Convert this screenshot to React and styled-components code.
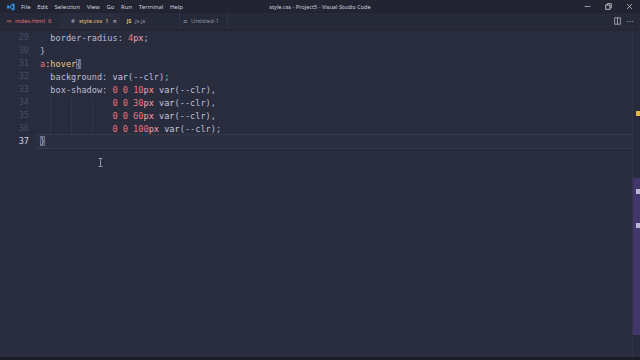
import React from "react";
import styled, { createGlobalStyle } from "styled-components";

const Global = createGlobalStyle`
  html, body { margin: 0; padding: 0; background: #292c3c; overflow: hidden; }
  #root { width: 640px; height: 360px; }
`;

const Window = styled.div`
  width: 640px;
  height: 360px;
  display: flex;
  flex-direction: column;
  background: #292c3c;
  font-family: "Noto Sans", "Open Sans", sans-serif;
  position: relative;
  overflow: hidden;
`;

const TitleBar = styled.div`
  height: 13px;
  flex: none;
  display: flex;
  align-items: center;
  background: #222432;
  color: #cdd0dc;
  font-size: 6px;
  position: relative;
`;

const Logo = styled.div`
  width: 20px;
  display: flex;
  justify-content: center;
  align-items: center;
  padding-left: 1px;
`;

const Menu = styled.div`
  display: flex;
  gap: 6.6px;
`;

const Title = styled.div`
  position: absolute;
  left: 0;
  right: 0;
  text-align: center;
  pointer-events: none;
  font-size: 5.6px;
  color: #cdd0dc;
`;

const Controls = styled.div`
  margin-left: auto;
  display: flex;
  align-items: center;
  gap: 14px;
  padding-right: 7px;
`;

const TabBar = styled.div`
  height: 16px;
  flex: none;
  display: flex;
  align-items: stretch;
  background: #262938;
  font-size: 6px;
  box-shadow: 0 1px 2px rgba(0, 0, 0, 0.25);
  position: relative;
  z-index: 1;
`;

const Tab = styled.div`
  display: flex;
  align-items: center;
  gap: 3px;
  padding: 0 0 0 ${(p) => p.$pl || 8}px;
  width: ${(p) => p.$w}px;
  box-sizing: border-box;
  background: ${(p) => (p.$active ? "#2a2d3e" : "transparent")};
  color: ${(p) => p.$color};
  border-right: 1px solid ${(p) => (p.$sep ? "#30344a" : "transparent")};
`;

const TabIcon = styled.span`
  color: ${(p) => p.$color};
  font-size: ${(p) => p.$size || 6}px;
  font-weight: 700;
  width: 6px;
  text-align: center;
`;

const TabBadge = styled.span`
  color: ${(p) => p.$color};
`;

const TabClose = styled.span`
  margin-left: 1px;
  color: #c9ccd8;
  font-size: 7px;
`;

const TabActions = styled.div`
  margin-left: auto;
  display: flex;
  align-items: center;
  gap: 6px;
  padding-right: 6px;
  color: #b7bacb;
`;

const More = styled.span`
  font-size: 7px;
  letter-spacing: 0.5px;
`;

const Editor = styled.div`
  flex: 1;
  display: flex;
  min-height: 0;
`;

const Lines = styled.div`
  flex: 1;
  padding-top: 2px;
  font-family: "DejaVu Sans Mono", "Liberation Mono", monospace;
  font-size: 8.6px;
  line-height: 13px;
  white-space: pre;
  color: #b8bdd6;
`;

const Line = styled.div`
  display: flex;
  height: 13px;
`;

const LineNo = styled.div`
  width: 29px;
  flex: none;
  text-align: right;
  color: ${(p) => (p.$current ? "#d5d8e4" : "#474c65")};
`;

const LineCode = styled.div`
  flex: 1;
  margin-left: 6px;
  padding-left: 5px;
  box-sizing: border-box;
  border-top: 1px solid ${(p) => (p.$current ? "#34384c" : "transparent")};
  border-bottom: 1px solid ${(p) => (p.$current ? "#34384c" : "transparent")};
  background: ${(p) => (p.$current ? "#2c2f40" : "transparent")};
  margin-top: ${(p) => (p.$current ? "-1px" : "0")};
  height: ${(p) => (p.$current ? "15px" : "13px")};
  line-height: 13px;
`;

const Tok = styled.span`
  color: ${(p) => p.$c};
`;

const Bracket = styled.span`
  outline: 1px solid #6b7088;
  outline-offset: -1px;
  background: #363a4f;
  color: ${(p) => p.$c || "#b8bdd6"};
`;

const Guides = styled.span`
  display: inline-block;
  width: 14ch;
  height: 13px;
  vertical-align: top;
  background-image: repeating-linear-gradient(
    to right,
    transparent 0,
    transparent 2ch,
    rgba(90, 96, 122, 0.2) 2ch,
    rgba(90, 96, 122, 0.2) calc(2ch + 1px),
    transparent calc(2ch + 1px),
    transparent 4ch
  );
`;

const Ruler = styled.div`
  width: 7px;
  flex: none;
  border-left: 1px solid #30344a;
  background: #282b3b;
  display: flex;
  flex-direction: column;
`;

const RulerTrack = styled.div`
  height: 149px;
  flex: none;
  position: relative;
`;

const Slider = styled.div`
  flex: 1;
  margin-bottom: 22px;
  background: #43366a;
  position: relative;
`;

const Mark = styled.div`
  position: absolute;
  right: 0;
  width: 4px;
  height: ${(p) => p.$h || 5}px;
  top: ${(p) => p.$top}px;
  background: ${(p) => p.$c};
`;

const StatusEdge = styled.div`
  height: 3px;
  flex: none;
  background: #1b1d28;
`;

const Pointer = styled.div`
  position: absolute;
  left: 98px;
  top: 158px;
  line-height: 0;
  display: flex;
`;

const CODE = [
  { n: 29, parts: [["  "], ["border-radius"], [": "], ["4", "#f07178"], ["px", "#f3a6b6"], [";"]] },
  { n: 30, parts: [["}"]] },
  { n: 31, parts: [["a", "#f07178"], [":hover", "#e8c98a"], ["{", null, true]] },
  { n: 32, parts: [["  "], ["background"], [": "], ["var", "#c5cae2"], ["(--clr);"]] },
  {
    n: 33,
    parts: [["  "], ["box-shadow"], [": "], ["0 0 10", "#f07178"], ["px", "#f3a6b6"], [" "], ["var", "#c5cae2"], ["(--clr),"]],
  },
  { n: 34, guides: true, parts: [["0 0 30", "#f07178"], ["px", "#f3a6b6"], [" "], ["var", "#c5cae2"], ["(--clr),"]] },
  { n: 35, guides: true, parts: [["0 0 60", "#f07178"], ["px", "#f3a6b6"], [" "], ["var", "#c5cae2"], ["(--clr),"]] },
  { n: 36, guides: true, parts: [["0 0 100", "#f07178"], ["px", "#f3a6b6"], [" "], ["var", "#c5cae2"], ["(--clr);"]] },
  { n: 37, current: true, parts: [["}", null, true]] },
];

function VSLogo() {
  return (
    <svg width="8" height="8" viewBox="0 0 24 24">
      <path d="M17.5 1 L23 3.6 V20.4 L17.5 23 L7.5 13.8 L3.2 17.1 L1 16 V8 L3.2 6.9 L7.5 10.2 Z" fill="#2f8ad8" />
      <path d="M17.5 6.5 V17.5 L10.3 12 Z" fill="#222432" />
      <path d="M1 8 L3.2 6.9 L7 12 L3.2 17.1 L1 16 Z" fill="#3c9de9" />
    </svg>
  );
}

export default function App() {
  return (
    <Window>
      <Global />
      <TitleBar>
        <Logo>
          <VSLogo />
        </Logo>
        <Menu>
          <span>File</span>
          <span>Edit</span>
          <span>Selection</span>
          <span>View</span>
          <span>Go</span>
          <span>Run</span>
          <span>Terminal</span>
          <span>Help</span>
        </Menu>
        <Title>style.css - Project5 - Visual Studio Code</Title>
        <Controls>
          <svg width="7" height="7" viewBox="0 0 10 10">
            <path d="M1 5 H9" stroke="#c9ccd8" strokeWidth="1" />
          </svg>
          <svg width="7" height="7" viewBox="0 0 10 10">
            <rect x="1" y="3" width="6" height="6" fill="none" stroke="#c9ccd8" strokeWidth="1.2" />
            <path d="M3 3 V1 H9 V7 H7" fill="none" stroke="#c9ccd8" strokeWidth="1.2" />
          </svg>
          <svg width="7" height="7" viewBox="0 0 10 10">
            <path d="M1.5 1.5 L8.5 8.5 M8.5 1.5 L1.5 8.5" stroke="#c9ccd8" strokeWidth="1.1" />
          </svg>
        </Controls>
      </TitleBar>
      <TabBar>
        <Tab $w={60} $pl={6} $color="#e0707a">
          <TabIcon $color="#d9735c" $size={5}>&lt;&gt;</TabIcon>
          <span>index.html</span>
          <TabBadge $color="#e0707a">6</TabBadge>
        </Tab>
        <Tab $w={60} $pl={10} $active $color="#e4c46a">
          <TabIcon $color="#8d93b0">#</TabIcon>
          <span>style.css</span>
          <TabBadge $color="#e4c46a">1</TabBadge>
          <TabClose>×</TabClose>
        </Tab>
        <Tab $w={60} $pl={6} $color="#8c91a8" $sep>
          <TabIcon $color="#e5cf5f" $size={5}>JS</TabIcon>
          <span>js.js</span>
        </Tab>
        <Tab $w={48} $pl={2} $color="#8c91a8" $sep>
          <TabIcon $color="#a4a8bd" $size={7}>≡</TabIcon>
          <span>Untitled-1</span>
        </Tab>
        <TabActions>
          <svg width="7" height="8" viewBox="0 0 10 11">
            <rect x="1" y="1" width="8" height="9" fill="none" stroke="#b7bacb" strokeWidth="1.1" />
            <path d="M5 1 V10" stroke="#b7bacb" strokeWidth="1.1" />
          </svg>
          <More>···</More>
        </TabActions>
      </TabBar>
      <Editor>
        <Lines>
          {CODE.map((l) => (
            <Line key={l.n}>
              <LineNo $current={l.current}>{l.n}</LineNo>
              <LineCode $current={l.current}>
                {l.guides && <Guides>{"              "}</Guides>}
                {l.parts.map(([t, c, br], i) =>
                  br ? (
                    <Bracket key={i}>{t}</Bracket>
                  ) : (
                    <Tok key={i} $c={c || "#b8bdd6"}>
                      {t}
                    </Tok>
                  )
                )}
              </LineCode>
            </Line>
          ))}
        </Lines>
        <Ruler>
          <RulerTrack>
            <Mark $top={82} $c="#e2b84a" />
          </RulerTrack>
          <Slider>
            <Mark $top={11} $c="#b9b6d6" $h={5} />
            <Mark $top={45} $c="#b9b6d6" $h={5} />
          </Slider>
        </Ruler>
      </Editor>
      <StatusEdge />
      <Pointer>
        <svg width="5" height="9" viewBox="0 0 5 9">
          <path d="M0.5 0.5 H4.5 M2.5 0.5 V8.5 M0.5 8.5 H4.5" stroke="#9a9fb6" strokeWidth="0.9" fill="none" />
        </svg>
      </Pointer>
    </Window>
  );
}
